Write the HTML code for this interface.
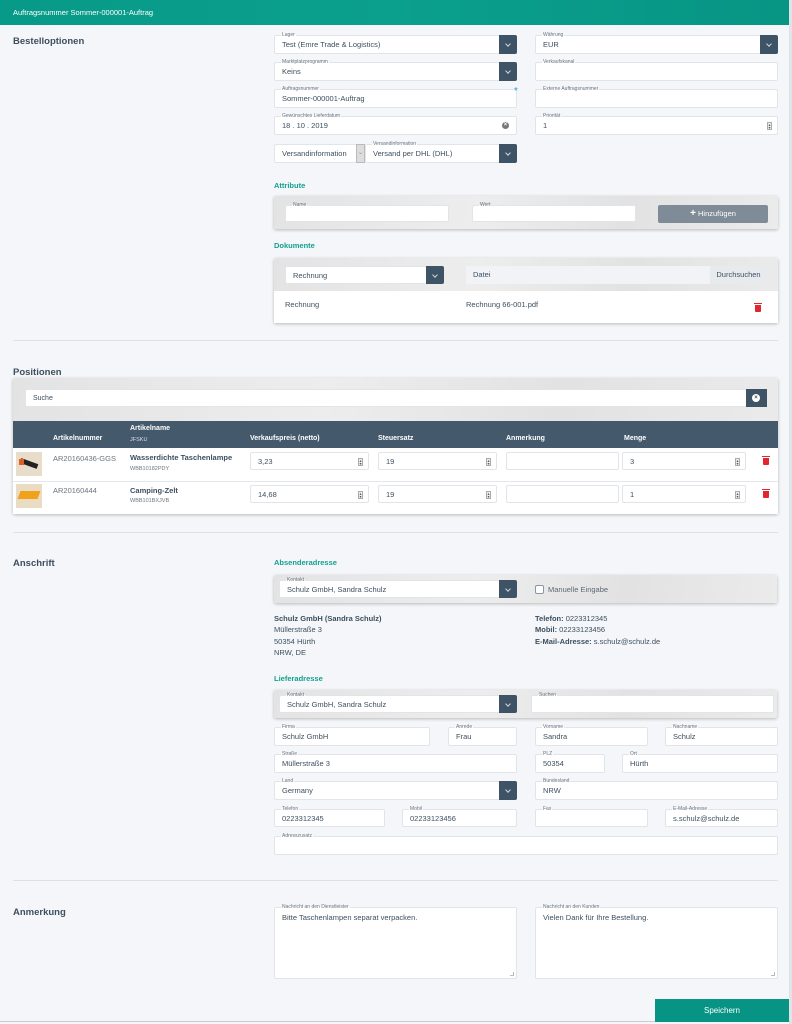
<!DOCTYPE html>
<html><head><meta charset="utf-8"><style>
*{box-sizing:border-box;margin:0;padding:0}
body{width:792px;height:1024px;background:#f4f6f9;font-family:"Liberation Sans",sans-serif;color:#3d4f5f;position:relative;overflow:hidden;font-size:8px}
.a{position:absolute}
.hdr{left:0;top:0;width:790px;height:25px;background:linear-gradient(90deg,#089a88,#0b9f8d 50%,#079584);color:#fff;font-size:7.5px;padding:8px 13px}
.h{font-size:9.5px;font-weight:bold;color:#3d4f5f}
.t{font-size:7.5px;font-weight:bold;color:#13a08e}
.f{position:absolute;background:#fff;border:1px solid #e1e5ea;border-radius:2px;font-size:7.5px;color:#3d4f5f;padding:0 0 0 7px;display:flex;align-items:center}
.f .l{position:absolute;top:-4px;left:6px;font-size:5px;color:#6a7580;background:linear-gradient(#f4f6f9 50%,#fff 50%);padding:0 1px;line-height:6px}
.f.p .l{background:linear-gradient(#e6e6e6 50%,#fff 50%)}
.btn{position:absolute;top:-1px;right:-1px;bottom:-1px;width:18px;background:#3e5466;border-radius:0 2px 2px 0}
.btn:after{content:"";position:absolute;left:7px;top:7px;width:3px;height:3px;border-right:1px solid #cfd6dc;border-bottom:1px solid #cfd6dc;transform:rotate(45deg)}
.spin{position:absolute;right:5px;top:5px;width:5px;height:8px;border:1px solid #aaa;background:#eee;font-size:4px;line-height:3px;text-align:center;color:#555}
.spin:before{content:"▴";display:block}
.spin:after{content:"▾";display:block}
.panel{position:absolute;background:linear-gradient(100deg,#e3e3e3,#ededed 40%,#e2e2e2 70%,#ebebeb);box-shadow:0 1px 3px rgba(0,0,0,.25);border-radius:2px}
.sep{position:absolute;left:13px;width:765px;height:1px;background:#dde1e6}
.trash{position:absolute;width:6px;height:7px;background:#e0262f;border-radius:0 0 1px 1px}
.trash:before{content:"";position:absolute;left:-1px;top:-2px;width:8px;height:1px;background:#e0262f}
.th{color:#fff;font-size:7px;font-weight:bold}
.txt{font-size:7.5px;color:#3d4f5f}
.x{position:absolute;border-radius:50%;color:#fff;font-size:6px;line-height:7px;text-align:center;font-weight:bold}
</style></head><body>
<div class="a hdr">Auftragsnummer Sommer-000001-Auftrag</div>
<div class="a" style="left:789px;top:0;width:3px;height:1024px;background:#e0e3e7"></div>

<div class="a h" style="left:13px;top:36px">Bestelloptionen</div>
<div class="f" style="left:274px;top:35px;width:243px;height:19px"><span class="l">Lager</span>Test (Emre Trade &amp; Logistics)<div class="btn"></div></div>
<div class="f" style="left:535px;top:35px;width:243px;height:19px"><span class="l">Währung</span>EUR<div class="btn"></div></div>
<div class="f" style="left:274px;top:62px;width:243px;height:19px"><span class="l">Marktplatzprogramm</span>Keins<div class="btn"></div></div>
<div class="f" style="left:535px;top:62px;width:243px;height:19px"><span class="l">Verkaufskanal</span></div>
<div class="f" style="left:274px;top:89px;width:243px;height:19px"><span class="l">Auftragsnummer</span>Sommer-000001-Auftrag</div>
<div class="a" style="left:514px;top:86px;color:#20a8c8;font-size:10px">*</div>
<div class="f" style="left:535px;top:89px;width:243px;height:19px"><span class="l">Externe Auftragsnummer</span></div>
<div class="f" style="left:274px;top:116px;width:243px;height:19px"><span class="l">Gewünschtes Lieferdatum</span>18 . 10 . 2019<div class="x" style="right:7px;top:5px;width:7px;height:7px;background:#777">×</div></div>
<div class="f" style="left:535px;top:116px;width:243px;height:19px"><span class="l">Priorität</span>1<div class="spin"></div></div>
<div class="f" style="left:274px;top:144px;width:83px;height:19px">Versandinformation</div>
<div class="a" style="left:356px;top:144px;width:9px;height:19px;background:#ddd;border:1px solid #bbb;font-size:6px;color:#888;text-align:center;line-height:17px">⌄</div>
<div class="f" style="left:365px;top:144px;width:152px;height:19px"><span class="l">Versandinformation</span>Versand per DHL (DHL)<div class="btn"></div></div>

<div class="a t" style="left:274px;top:181px">Attribute</div>
<div class="panel" style="left:274px;top:196px;width:504px;height:33px"></div>
<div class="f p" style="left:285px;top:205px;width:164px;height:17px"><span class="l">Name</span></div>
<div class="f p" style="left:472px;top:205px;width:164px;height:17px"><span class="l">Wert</span></div>
<div class="a" style="left:658px;top:205px;width:110px;height:18px;background:#7f8c97;border-radius:2px;color:#fff;font-size:7.5px;text-align:center;line-height:18px"><b style="font-size:10px">+</b> Hinzufügen</div>

<div class="a t" style="left:274px;top:241px">Dokumente</div>
<div class="panel" style="left:274px;top:258px;width:504px;height:65px"></div>
<div class="a" style="left:274px;top:291px;width:504px;height:32px;background:#fff"></div>
<div class="f p" style="left:285px;top:266px;width:159px;height:18px">Rechnung<div class="btn"></div></div>
<div class="a" style="left:466px;top:266px;width:301px;height:18px;background:#f1f3f6;font-size:7.5px;line-height:18px;padding-left:7px">Datei<span class="a" style="left:244px;top:0;width:57px;height:18px;background:#e8ebee;text-align:center">Durchsuchen</span></div>
<div class="a txt" style="left:285px;top:300px">Rechnung</div>
<div class="a txt" style="left:466px;top:300px">Rechnung 66-001.pdf</div>
<div class="trash" style="left:755px;top:305px"></div>

<div class="sep" style="top:340px"></div>
<div class="a h" style="left:13px;top:367px">Positionen</div>
<div class="panel" style="left:13px;top:378px;width:765px;height:136px"></div>
<div class="f p" style="left:25px;top:389px;width:722px;height:18px;font-size:7px">Suche</div>
<div class="a" style="left:746px;top:389px;width:21px;height:18px;background:#3e5466"><div class="x" style="left:6px;top:5px;width:8px;height:8px;background:#fff;color:#3e5466;line-height:8px">×</div></div>
<div class="a" style="left:13px;top:421px;width:765px;height:27px;background:#44596b"></div>
<div class="a th" style="left:53px;top:435px">Artikelnummer</div>
<div class="a th" style="left:130px;top:425px">Artikelname</div>
<div class="a" style="left:130px;top:437px;color:#dde;font-size:5.5px">JFSKU</div>
<div class="a th" style="left:250px;top:435px">Verkaufspreis (netto)</div>
<div class="a th" style="left:378px;top:435px">Steuersatz</div>
<div class="a th" style="left:506px;top:435px">Anmerkung</div>
<div class="a th" style="left:624px;top:435px">Menge</div>
<div class="a" style="left:13px;top:448px;width:765px;height:66px;background:#fff"></div>
<div class="a" style="left:13px;top:481px;width:765px;height:1px;background:#e4e7eb"></div>
<div class="a" style="left:16px;top:452px;width:26px;height:24px;background:#e8dccb"><div class="a" style="left:4px;top:9px;width:18px;height:5px;background:#222;transform:rotate(20deg)"></div><div class="a" style="left:3px;top:7px;width:5px;height:6px;background:#e06020"></div></div>
<div class="a" style="left:16px;top:484px;width:26px;height:24px;background:#eadcc3"><div class="a" style="left:3px;top:7px;width:20px;height:8px;background:#f1a21a;transform:skewX(-20deg)"></div></div>
<div class="a txt" style="left:53px;top:454px;color:#6a7580">AR20160436-GGS</div>
<div class="a txt" style="left:130px;top:453px;font-weight:bold">Wasserdichte Taschenlampe</div>
<div class="a" style="left:130px;top:466px;font-size:5.5px;color:#6a7580">WBB10182PDY</div>
<div class="a txt" style="left:53px;top:486px;color:#6a7580">AR20160444</div>
<div class="a txt" style="left:130px;top:486px;font-weight:bold">Camping-Zelt</div>
<div class="a" style="left:130px;top:498px;font-size:5.5px;color:#6a7580">WBB101BXJVB</div>
<div class="f" style="left:250px;top:452px;width:119px;height:18px">3,23<div class="spin"></div></div>
<div class="f" style="left:378px;top:452px;width:119px;height:18px">19<div class="spin"></div></div>
<div class="f" style="left:506px;top:452px;width:113px;height:18px"></div>
<div class="f" style="left:622px;top:452px;width:124px;height:18px">3<div class="spin"></div></div>
<div class="trash" style="left:763px;top:458px"></div>
<div class="f" style="left:250px;top:485px;width:119px;height:18px">14,68<div class="spin"></div></div>
<div class="f" style="left:378px;top:485px;width:119px;height:18px">19<div class="spin"></div></div>
<div class="f" style="left:506px;top:485px;width:113px;height:18px"></div>
<div class="f" style="left:622px;top:485px;width:124px;height:18px">1<div class="spin"></div></div>
<div class="trash" style="left:763px;top:491px"></div>

<div class="sep" style="top:532px"></div>
<div class="a h" style="left:13px;top:558px">Anschrift</div>
<div class="a t" style="left:274px;top:558px">Absenderadresse</div>
<div class="panel" style="left:274px;top:575px;width:503px;height:28px"></div>
<div class="f p" style="left:279px;top:580px;width:238px;height:18px"><span class="l">Kontakt</span>Schulz GmbH, Sandra Schulz<div class="btn"></div></div>
<div class="a" style="left:535px;top:585px;width:9px;height:9px;border:1px solid #8a96a0;border-radius:2px;background:#fff"></div>
<div class="a txt" style="left:548px;top:585px;color:#5b6874">Manuelle Eingabe</div>
<div class="a txt" style="left:274px;top:613px;line-height:11.3px"><b>Schulz GmbH (Sandra Schulz)</b><br>Müllerstraße 3<br>50354 Hürth<br>NRW, DE</div>
<div class="a txt" style="left:535px;top:613px;line-height:11.3px"><b>Telefon:</b> 0223312345<br><b>Mobil:</b> 02233123456<br><b>E-Mail-Adresse:</b> s.schulz@schulz.de</div>

<div class="a t" style="left:274px;top:674px">Lieferadresse</div>
<div class="panel" style="left:274px;top:690px;width:503px;height:28px"></div>
<div class="f p" style="left:279px;top:695px;width:238px;height:18px"><span class="l">Kontakt</span>Schulz GmbH, Sandra Schulz<div class="btn"></div></div>
<div class="f p" style="left:531px;top:695px;width:243px;height:18px"><span class="l">Suchen</span></div>
<div class="f" style="left:274px;top:727px;width:156px;height:19px"><span class="l">Firma</span>Schulz GmbH</div>
<div class="f" style="left:448px;top:727px;width:69px;height:19px"><span class="l">Anrede</span>Frau</div>
<div class="f" style="left:535px;top:727px;width:113px;height:19px"><span class="l">Vorname</span>Sandra</div>
<div class="f" style="left:665px;top:727px;width:113px;height:19px"><span class="l">Nachname</span>Schulz</div>
<div class="f" style="left:274px;top:754px;width:243px;height:19px"><span class="l">Straße</span>Müllerstraße 3</div>
<div class="f" style="left:535px;top:754px;width:70px;height:19px"><span class="l">PLZ</span>50354</div>
<div class="f" style="left:622px;top:754px;width:156px;height:19px"><span class="l">Ort</span>Hürth</div>
<div class="f" style="left:274px;top:781px;width:243px;height:19px"><span class="l">Land</span>Germany<div class="btn"></div></div>
<div class="f" style="left:535px;top:781px;width:243px;height:19px"><span class="l">Bundesland</span>NRW</div>
<div class="f" style="left:274px;top:809px;width:111px;height:18px"><span class="l">Telefon</span>0223312345</div>
<div class="f" style="left:402px;top:809px;width:115px;height:18px"><span class="l">Mobil</span>02233123456</div>
<div class="f" style="left:535px;top:809px;width:113px;height:18px"><span class="l">Fax</span></div>
<div class="f" style="left:665px;top:809px;width:113px;height:18px"><span class="l">E-Mail-Adresse</span>s.schulz@schulz.de</div>
<div class="f" style="left:274px;top:836px;width:504px;height:19px"><span class="l">Adresszusatz</span></div>

<div class="sep" style="top:880px"></div>
<div class="a h" style="left:13px;top:907px">Anmerkung</div>
<div class="f" style="left:274px;top:907px;width:243px;height:72px;align-items:flex-start;padding-top:5px"><span class="l">Nachricht an den Dienstleister</span>Bitte Taschenlampen separat verpacken.<div class="a" style="right:2px;bottom:2px;width:4px;height:4px;border-right:1px solid #bbb;border-bottom:1px solid #bbb"></div></div>
<div class="f" style="left:535px;top:907px;width:243px;height:72px;align-items:flex-start;padding-top:5px"><span class="l">Nachricht an den Kunden</span>Vielen Dank für Ihre Bestellung.<div class="a" style="right:2px;bottom:2px;width:4px;height:4px;border-right:1px solid #bbb;border-bottom:1px solid #bbb"></div></div>
<div class="a" style="left:0;top:1021px;width:790px;height:1px;background:#c9cdd2"></div>
<div class="a" style="left:655px;top:999px;width:134px;height:23px;background:#079484;color:#fff;font-size:8px;text-align:center;line-height:23px">Speichern</div>
</body></html>
